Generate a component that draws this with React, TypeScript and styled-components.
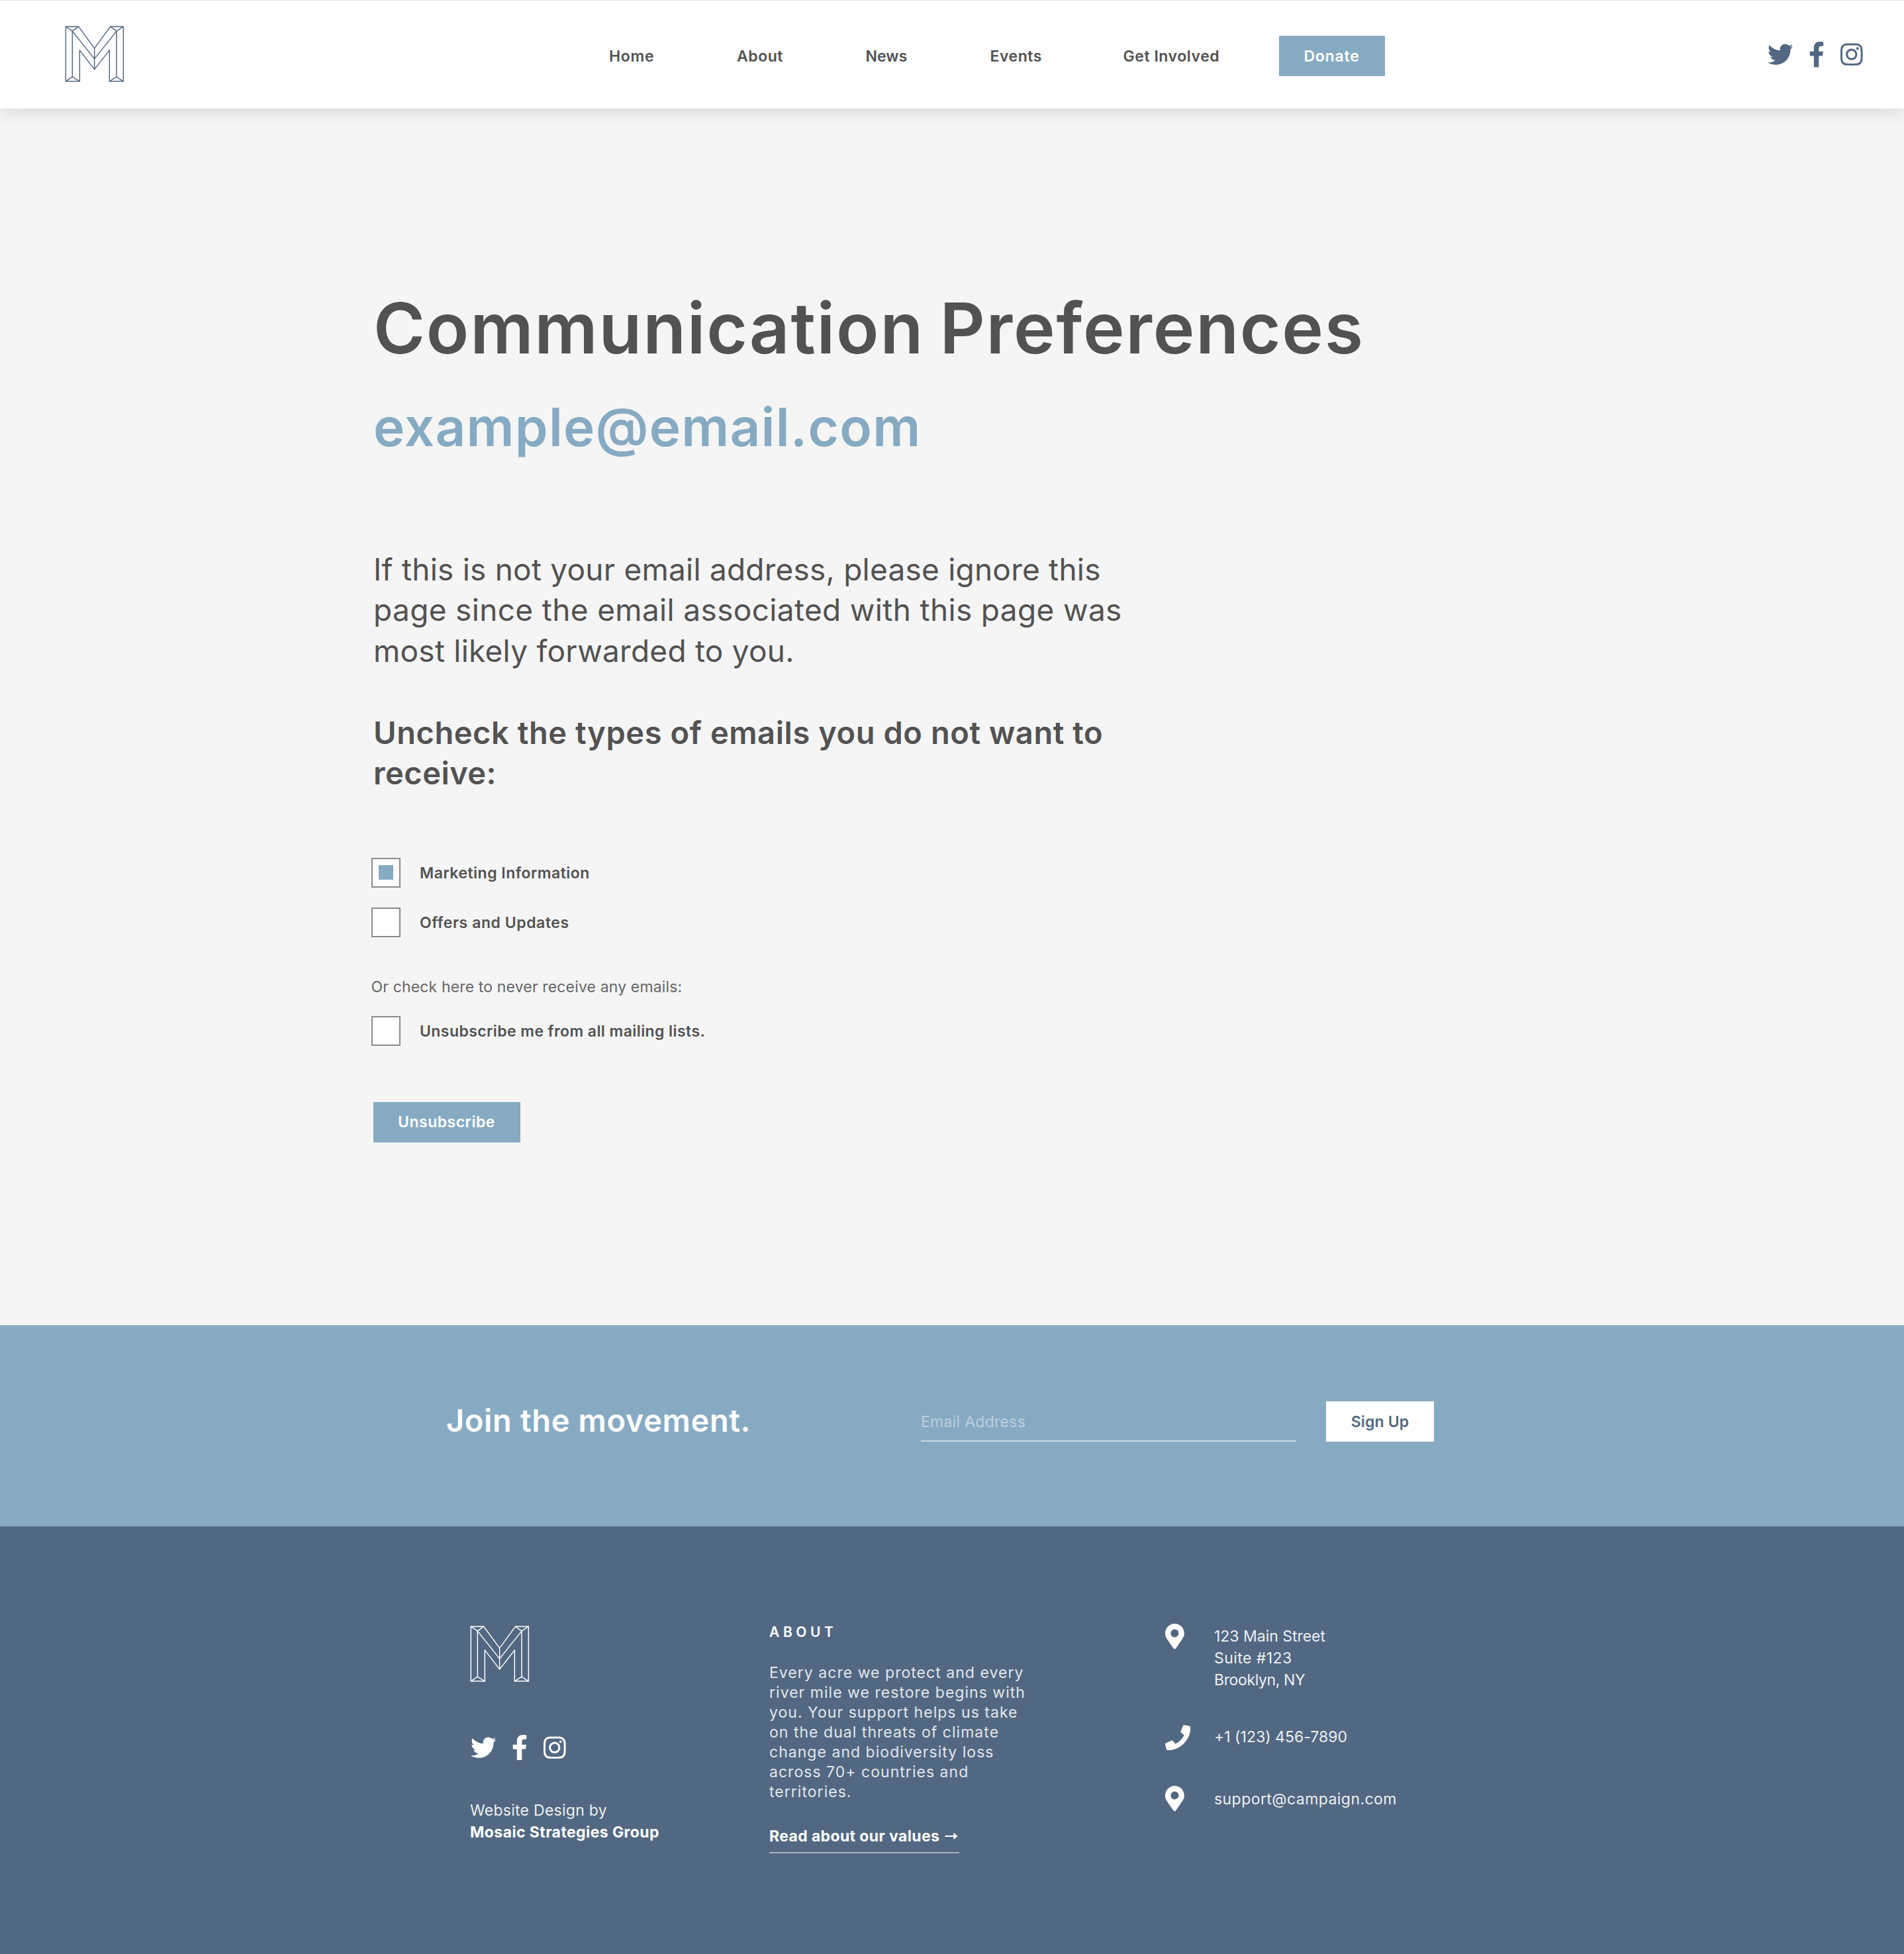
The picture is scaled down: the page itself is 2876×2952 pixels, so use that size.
import React from 'react';
import styled, { createGlobalStyle, css } from 'styled-components';
import { FaTwitter, FaFacebookF, FaInstagram, FaMapMarkerAlt, FaPhone } from 'react-icons/fa';

const sky = '#87aac3';
const slate = '#526882';
const ink = '#525252';

const GlobalStyle = createGlobalStyle`
  * { box-sizing: border-box; }
  body {
    margin: 0;
    background: #f5f5f5;
    color: ${ink};
    font-family: Inter, 'Liberation Sans', sans-serif;
    font-size: 23px;
    font-kerning: normal;
  }
  h1, h2, h3, p { margin: 0; }
  a { color: inherit; text-decoration: none; }
`;

type Tracked = { $track?: number };
const tracking = css<Tracked>`
  letter-spacing: ${({ $track = 0 }) => $track}px;
`;

const Page = styled.div`
  display: flex;
  flex-direction: column;
  min-height: 2952px;
`;

const Header = styled.header`
  display: flex;
  align-items: center;
  height: 164px;
  padding: 0 62px 0 98px;
  background: #fff;
  border-top: 1px solid #e4e4e4;
  box-shadow: 0 4px 24px rgba(0, 0, 0, 0.12);
  z-index: 1;
`;

const LogoSvg = styled.svg<{ $color: string }>`
  display: block;
  width: 90px;
  height: 85px;
  fill: none;
  stroke: ${({ $color }) => $color};
  stroke-width: 4.4;
  stroke-linejoin: round;
  stroke-linecap: round;
`;

const HomeLink = styled.a`
  padding-bottom: 2px;
`;

const Nav = styled.nav`
  display: grid;
  grid-template-columns: 193px 194.5px 188px 201px 235.5px 160px;
  align-items: center;
  margin-left: 731.5px;
  padding-top: 4px;
`;

const NavLink = styled.a<Tracked>`
  padding-left: 0.5px;
  font-weight: 600;
  line-height: 30px;
  ${tracking}
`;

const Button = styled.button<Tracked & { $width: number; $light?: boolean }>`
  width: ${({ $width }) => $width}px;
  height: 61px;
  padding: 0;
  border: 0;
  font: 600 23px/30px Inter, 'Liberation Sans', sans-serif;
  text-align: center;
  color: ${({ $light }) => ($light ? slate : '#fff')};
  background: ${({ $light }) => ($light ? '#fff' : sky)};
  ${tracking}
`;

const SocialIcon = styled.span<{ $width: number }>`
  display: block;
  width: ${({ $width }) => $width}px;
  height: 38.4px;
  svg {
    display: block;
    width: 100%;
    height: 100%;
  }
`;

const Socials = styled.div<{ $color: string }>`
  display: flex;
  gap: 24px;
  color: ${({ $color }) => $color};
`;

const HeaderSocials = styled(Socials)`
  margin-left: auto;
`;

const Main = styled.main`
  height: 1838px;
  padding: 272px 0 0 564px;
`;

const Title = styled.h1<Tracked>`
  font-size: 106px;
  line-height: 120px;
  font-weight: 600;
  white-space: nowrap;
  word-spacing: -5px;
  ${tracking}
`;

const Address = styled.h2<Tracked>`
  margin-top: 39px;
  font-size: 80px;
  line-height: 100px;
  font-weight: 600;
  color: ${sky};
  ${tracking}
`;

const Copy = styled.p<{ $strong?: boolean }>`
  margin-top: ${({ $strong }) => ($strong ? 61.5 : 134.5)}px;
  font-size: ${({ $strong }) => ($strong ? 47 : 46)}px;
  line-height: 61.5px;
  font-weight: ${({ $strong }) => ($strong ? 600 : 400)};
`;

const Line = styled.span<Tracked>`
  display: block;
  white-space: nowrap;
  ${tracking}
`;

const Options = styled.form`
  display: flex;
  flex-direction: column;
  align-items: flex-start;
  margin: 97px 0 0 -3.5px;
`;

const OptionRow = styled.label<Tracked>`
  display: flex;
  align-items: center;
  gap: 29.5px;
  height: 45px;
  margin-bottom: 30px;
  font-weight: 600;
  ${tracking}
`;

const OptionText = styled.span`
  padding-top: 1px;
`;

const Box = styled.span`
  display: grid;
  place-items: center;
  width: 44px;
  height: 45px;
  background: #fff;
  border: 2px solid #8b8b8b;
`;

const Mark = styled.span`
  width: 22px;
  height: 22px;
  background: ${sky};
`;

const Note = styled.p<Tracked>`
  margin: 30px 0 29px;
  line-height: 30px;
  color: #666;
  ${tracking}
`;

const SubmitArea = styled.div`
  padding: 55px 0 0 3px;
`;

const Band = styled.section`
  display: grid;
  grid-template-columns: 717px 566px auto;
  justify-content: start;
  align-items: start;
  height: 304px;
  padding: 115px 0 0 674px;
  background: ${sky};
  & > button { margin-left: 46px; }
`;

const BandTitle = styled.h3<Tracked>`
  font-size: 47px;
  line-height: 58px;
  font-weight: 600;
  color: #fff;
  ${tracking}
`;

const EmailInput = styled.input`
  width: 566px;
  height: 61px;
  padding: 3px 0 0;
  border: 0;
  border-bottom: 2px solid #cbdbe6;
  border-radius: 0;
  outline: 0;
  background: transparent;
  color: #fff;
  font: 400 23px/30px Inter, 'Liberation Sans', sans-serif;
  letter-spacing: 0.28px;
  &::placeholder {
    color: rgba(255, 255, 255, 0.45);
    opacity: 1;
  }
`;

const Footer = styled.footer`
  display: grid;
  grid-template-columns: 452px 598px auto;
  align-items: start;
  flex: 1;
  padding: 144px 0 0 710px;
  background: ${slate};
  color: #fff;
`;

const BrandColumn = styled.div`
  display: flex;
  flex-direction: column;
  padding-top: 6px;
`;

const FooterSocials = styled(Socials)`
  margin: 80px 0 60px 1px;
`;

const FooterLine = styled.span<Tracked & { $bold?: boolean }>`
  display: block;
  line-height: 33px;
  font-weight: ${({ $bold }) => ($bold ? 700 : 400)};
  color: ${({ $bold }) => ($bold ? '#fff' : 'rgba(255,255,255,0.92)')};
  white-space: nowrap;
  ${tracking}
`;

const AboutColumn = styled.div`
  display: flex;
  flex-direction: column;
  align-items: flex-start;
  width: 396px;
  padding-top: 1px;
`;

const AboutTitle = styled.h3`
  font-size: 21px;
  line-height: 30px;
  font-weight: 600;
  letter-spacing: 5.6px;
`;

const AboutText = styled.p`
  margin-top: 31px;
  line-height: 30px;
  letter-spacing: 1.03px;
  color: rgba(255, 255, 255, 0.86);
`;

const ValuesLink = styled.a`
  display: flex;
  align-items: center;
  gap: 8px;
  width: 287px;
  height: 41px;
  margin-top: 37px;
  padding-bottom: 9px;
  border-bottom: 2px solid #a9b4c1;
  line-height: 30px;
  font-weight: 700;
  letter-spacing: 0.37px;
  white-space: nowrap;
`;

const Contacts = styled.div`
  display: flex;
  flex-direction: column;
  padding-top: 3px;
`;

const ContactRow = styled.div<{ $space: number; $drop: number; $icon: number }>`
  display: grid;
  grid-template-columns: 74px auto;
  align-items: start;
  margin-bottom: ${({ $space }) => $space}px;
  svg {
    display: block;
    width: ${({ $icon }) => $icon}px;
    height: 38.4px;
  }
  & > div { padding-top: ${({ $drop }) => $drop}px; }
`;

function Logo({ color }: { color: string }) {
  return (
    <LogoSvg $color={color} viewBox="115 118 270 254">
      <path d="M119 121H177L249 219L321 121H380V369H317V228L249 315L182 228V369H119Z" />
      <path d="M149 349V142L249 267L349 142V349M249 219V315" />
      <path d="M119 121L149 142L177 121M321 121L349 142L380 121M119 369L149 349L182 369M317 369L349 349L380 369" />
    </LogoSvg>
  );
}

const SocialIcons = () => (
  <>
    <SocialIcon $width={38.4}><FaTwitter /></SocialIcon>
    <SocialIcon $width={24}><FaFacebookF /></SocialIcon>
    <SocialIcon $width={33.6}><FaInstagram /></SocialIcon>
  </>
);

const Arrow = () => (
  <svg width="20" height="12" viewBox="0 0 20 12">
    <path d="M0.5 6H15" stroke="#fff" strokeWidth="2" />
    <path d="M13.5 0.8L19.5 6L13.5 11.2Z" fill="#fff" />
  </svg>
);

function Option({ text, track, checked }: { text: string; track: number; checked?: boolean }) {
  return (
    <OptionRow $track={track}>
      <Box>{checked && <Mark />}</Box>
      <OptionText>{text}</OptionText>
    </OptionRow>
  );
}

export default function App() {
  return (
    <Page>
      <GlobalStyle />
      <Header>
        <HomeLink><Logo color={slate} /></HomeLink>
        <Nav>
          <NavLink $track={0.69}>Home</NavLink>
          <NavLink $track={0.55}>About</NavLink>
          <NavLink $track={0.06}>News</NavLink>
          <NavLink $track={0.52}>Events</NavLink>
          <NavLink $track={0.55}>Get Involved</NavLink>
          <Button $width={160} $track={0.79}>Donate</Button>
        </Nav>
        <HeaderSocials $color={slate}><SocialIcons /></HeaderSocials>
      </Header>

      <Main>
        <Title $track={1.75}>Communication Preferences</Title>
        <Address $track={1.2}>example@email.com</Address>
        <Copy>
          <Line $track={0.22}>If this is not your email address, please ignore this</Line>
          <Line $track={0.34}>page since the email associated with this page was</Line>
          <Line $track={0.24}>most likely forwarded to you.</Line>
        </Copy>
        <Copy $strong>
          <Line $track={0.56}>Uncheck the types of emails you do not want to</Line>
          <Line $track={0.45}>receive:</Line>
        </Copy>
        <Options>
          <Option text="Marketing Information" track={0.48} checked />
          <Option text="Offers and Updates" track={0.56} />
          <Note $track={0.15}>Or check here to never receive any emails:</Note>
          <Option text="Unsubscribe me from all mailing lists." track={0.42} />
          <SubmitArea>
            <Button type="button" $width={222} $track={0.49}>Unsubscribe</Button>
          </SubmitArea>
        </Options>
      </Main>

      <Band>
        <BandTitle $track={0.63}>Join the movement.</BandTitle>
        <EmailInput placeholder="Email Address" />
        <Button $width={163} $light $track={0.16}>Sign Up</Button>
      </Band>

      <Footer>
        <BrandColumn>
          <Logo color="#fff" />
          <FooterSocials $color="#fff"><SocialIcons /></FooterSocials>
          <FooterLine $track={0.27}>Website Design by</FooterLine>
          <FooterLine $bold $track={0.41}>Mosaic Strategies Group</FooterLine>
        </BrandColumn>
        <AboutColumn>
          <AboutTitle>ABOUT</AboutTitle>
          <AboutText>
            Every acre we protect and every river mile we restore begins with you. Your support helps
            us take on the dual threats of climate change and biodiversity loss across 70+ countries
            and territories.
          </AboutText>
          <ValuesLink>Read about our values<Arrow /></ValuesLink>
        </AboutColumn>
        <Contacts>
          <ContactRow $space={51} $drop={3} $icon={28.8}>
            <FaMapMarkerAlt />
            <div>
              <FooterLine $track={-0.02}>123 Main Street</FooterLine>
              <FooterLine $track={0.44}>Suite #123</FooterLine>
              <FooterLine $track={-0.37}>Brooklyn, NY</FooterLine>
            </div>
          </ContactRow>
          <ContactRow $space={54} $drop={2} $icon={38.4}>
            <FaPhone />
            <div><FooterLine $track={0.02}>+1 (123) 456-7890</FooterLine></div>
          </ContactRow>
          <ContactRow $space={0} $drop={4} $icon={28.8}>
            <FaMapMarkerAlt />
            <div><FooterLine $track={0.44}>support@campaign.com</FooterLine></div>
          </ContactRow>
        </Contacts>
      </Footer>
    </Page>
  );
}
